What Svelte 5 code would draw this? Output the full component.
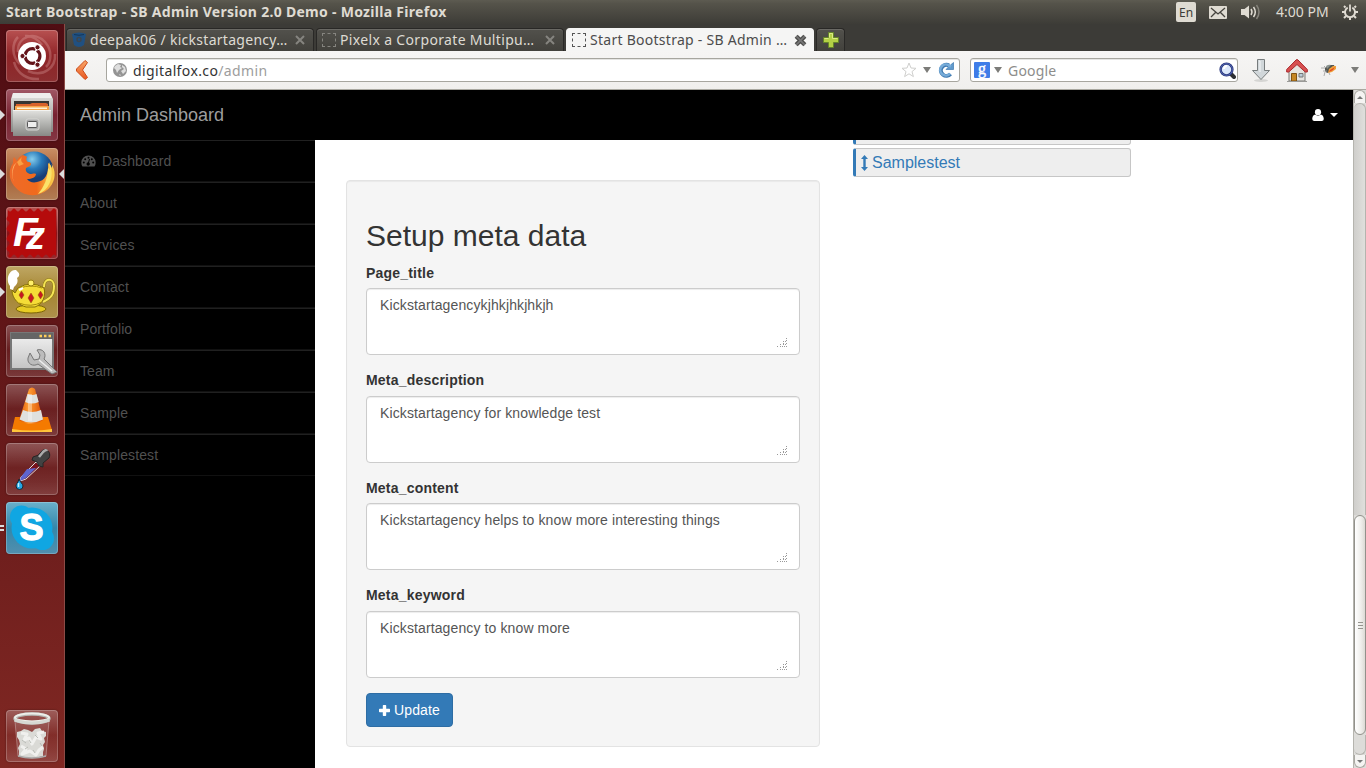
<script>
  const menu = ['Dashboard', 'About', 'Services', 'Contact', 'Portfolio', 'Team', 'Sample', 'Samplestest'];
  const fields = [
    { label: 'Page_title', value: 'Kickstartagencykjhkjhkjhkjh' },
    { label: 'Meta_description', value: 'Kickstartagency for knowledge test' },
    { label: 'Meta_content', value: 'Kickstartagency helps to know more interesting things' },
    { label: 'Meta_keyword', value: 'Kickstartagency to know more' }
  ];
  const grip = [[9, 0], [9, 2], [6, 3], [8, 3], [6, 5], [9, 5], [3, 6], [6, 6], [8, 6], [0, 8], [3, 8], [5, 8], [7, 8], [9, 8]];
  const apps = ['dash', 'files', 'firefox', 'filezilla', 'teapot', 'tools', 'vlc', 'picker', 'skype'];
  const running = { files: 1, firefox: 1, teapot: 1, skype: 2 };
</script>

<div class="screen">
  <header class="panel">
    <span class="wintitle">Start Bootstrap - SB Admin Version 2.0 Demo - Mozilla Firefox</span>
    <div class="tray">
      <span class="lang">En</span>
      <svg class="mail" width="18" height="13" viewBox="0 0 18 13"><rect width="18" height="13" rx="1" fill="#dfdbd2"/><path d="M2 2l7 6 7-6M2 11l4.500-4.500M16 11l-4.500-4.500" fill="none" stroke="#45433d" stroke-width="1.300"/></svg>
      <svg class="sound" width="20" height="16" viewBox="0 0 20 16"><path d="M0 5h3.500L8 1.500v13L3.500 11H0z" fill="#dfdbd2"/><path d="M10 5q2 3 0 6M12.500 3q3.600 5 0 10" fill="none" stroke="#dfdbd2" stroke-width="1.500"/><path d="M15.500 1q5 7 0 14" fill="none" stroke="#85827a" stroke-width="1.500"/></svg>
      <span class="clock">4:00 PM</span>
      <svg class="gear" width="16" height="16" viewBox="0 0 16 16" fill="none" stroke="#dfdbd2"><path d="M5.700 3.700a5 5 0 1 0 4.600 0" stroke-width="1.900"/><path d="M8 .5v7" stroke-width="1.800"/><path d="M3.500 3.500L2 2M12.500 3.500L14 2M3 8H0M13 8h3M4 12l-2 2M12 12l2 2M8 13.500V16" stroke-width="2"/></svg>
    </div>
  </header>

  <div class="desktop">
    <aside class="launcher">
      {#each apps as app}
        <div class="slot">
          <div class="tile {app}">
            <svg width="52" height="52" viewBox="0 0 52 52">
              {#if app === 'dash'}
                <g fill="none" stroke="#edb9b7" opacity=".28" stroke-width="2.500"><path d="M12 22C11 6 29 1 39 12 47 21 45 32 40 37"/><path d="M14 34C5 26 6 13 12 7"/><path d="M22 41c16 7 28-4 27-17"/><path d="M8 32c3 12 14 18 25 17"/><path d="M36 15Q29 5 19 6"/></g>
                <circle cx="26" cy="26" r="14" fill="#fff"/>
                <circle cx="26.500" cy="26" r="7.400" fill="none" stroke="#64141a" stroke-width="3.200" stroke-dasharray="13.900 1.600" stroke-dashoffset="7"/>
                <g fill="#64141a" stroke="#fff" stroke-width="1"><circle cx="16.500" cy="26" r="2.600"/><circle cx="31.500" cy="17.300" r="2.600"/><circle cx="31.500" cy="34.700" r="2.600"/></g>
              {:else if app === 'files'}
                <defs><linearGradient id="steel" x2="0" y2="1"><stop stop-color="#e2e2df"/><stop offset="1" stop-color="#888986"/></linearGradient></defs>
                <path d="M7 4h37l3 6v33H5V10z" fill="url(#steel)"/><path d="M7 4h37l2 5H6z" fill="#eeeeec"/>
                <path d="M8 12h35v9H8z" fill="#373633"/><path d="M10 15h14l2-1h14l2 1v6H9z" fill="#d8622b"/><path d="M9 17h34v4H9z" fill="#f5a54b"/><path d="M11 18.500h30v1.500H11z" fill="#fff2d8"/>
                <path d="M7 21h38v26H7z" fill="url(#steel)"/><path d="M7 21.500h38" stroke="#f3f3f1"/>
                <rect x="20" y="30" width="13" height="11" rx="2" fill="#aaa" stroke="#d6d6d3"/><rect x="21.500" y="32.500" width="9.500" height="6" rx="1" fill="#eee" stroke="#555"/>
              {:else if app === 'firefox'}
                <defs><radialGradient id="globe" cx=".45" cy=".2"><stop stop-color="#86cdec"/><stop offset=".5" stop-color="#2778b8"/><stop offset="1" stop-color="#173e77"/></radialGradient><linearGradient id="fox" x2="1"><stop stop-color="#ee6a2a"/><stop offset=".6" stop-color="#f06a1c"/><stop offset="1" stop-color="#fcd34e"/></linearGradient></defs>
                <circle cx="28" cy="23" r="19.500" fill="url(#globe)"/>
                <path d="M17 7c1 0 3 1 4 2-1 2-1 4 1 5 3 0 4 2 2 4l-4 2c-1 3 1 5 4 6 3 0 4-1 6 0 0 3-4 5-9 5 2 3 6 4 10 3 8-1 12-8 11-19 2 1 3 3 4 5 0-2 0-4-1-5 5 7 5 17-1 24-8 10-24 11-33 2C2 33 2 22 7 15c0-2 0-4 1-6l3 4c1-3 3-5 6-6z" fill="url(#fox)"/>
                <path d="M43 14c5 9 3 21-4 28-2 2-5 3-7 4 6-7 10-16 10-26l2 2z" fill="#fbe269"/><path d="M11 14c-4 5-6 12-3 20-3-7-2-13 0-17z" fill="#ffb066"/><path d="M17 8c-3 3-2 6 1 8l-5 2-2-4z" fill="#f9a044"/>
              {:else if app === 'filezilla'}
                <path d="M2 3q2 3 4 0t4 0 4 0 4 0 4 0 4 0 4 0 4 0 4 0 4 0 4 0 4 0v46q-2-3-4 0t-4 0-4 0-4 0-4 0-4 0-4 0-4 0-4 0-4 0-4 0-4 0q3-3 0-5t0-5 0-5 0-5 0-5 0-5 0-5 0-5z" fill="#b50b0c"/>
                <text x="7" y="39" font-family="Liberation Sans" font-size="41" font-style="italic" font-weight="bold" fill="#fff">F<tspan dx="-12" dy="3" font-size="38">z</tspan></text>
              {:else if app === 'teapot'}
                <path d="M4 20C-1 14 3 3 10 4q6 5 1 8 2 5-3 9l-1 3-3-1z" fill="#fff"/>
                <path d="M38 21c0-10 10-9 10-1 0 9-3 12-11 16" fill="none" stroke="#8c7a10" stroke-width="3"/><path d="M38 21c0-10 10-9 10-1 0 9-3 12-11 16" fill="none" stroke="#f5e455" stroke-width="2"/>
                <ellipse cx="25" cy="43" rx="15" ry="4" fill="#e8cc24" stroke="#7b6406"/>
                <path d="M12 22q13-8 26 0c2 8-1 16-9 19h-9C13 39 6 33 6 24l3 3z" fill="#f5dc37" stroke="#857008"/><path d="M14 22q11-4 22 0M13 37q12 5 23-1" fill="none" stroke="#a78b0c"/>
                <circle cx="25" cy="17" r="3" fill="#fff06a" stroke="#998010"/><g fill="#c81821" stroke="#8c5a0c" stroke-width=".5"><path d="M25 27l3 5-3 5-3-5z"/><path d="M15.500 25l2.500 4-2.500 4-2.500-4zM34.500 25l2.500 4-2.500 4-2.500-4z"/></g><path d="M13 24l4-2" stroke="#fff" stroke-width="2"/>
              {:else if app === 'tools'}
                <defs><linearGradient id="win" x2="0" y2="1"><stop stop-color="#f2f2f2"/><stop offset="1" stop-color="#c4c4c4"/></linearGradient></defs>
                <rect x="5" y="8" width="42" height="36" fill="url(#win)" stroke="#777" stroke-width="2"/><path d="M5 8h42v6H5z" fill="#656565"/><path d="M33.500 11h2.500M38 11h2.500M42.500 11h2.500" stroke="#ffcd5b" stroke-width="2.500"/>
                <path d="M24 28l-2 5c-1 6 5 9 10 6l14 10 5-2-13-13c3-5-1-11-7-9l3 5-1 4-5 1z" fill="#bcbcbc" stroke="#777"/><path d="M33 35l13 11" stroke="#eee" stroke-width="1.500"/>
              {:else if app === 'vlc'}
                <defs><linearGradient id="cone" x2="1"><stop stop-color="#d94f00"/><stop offset=".4" stop-color="#ff9e35"/><stop offset="1" stop-color="#d94b00"/></linearGradient></defs>
                <path d="M9 33h33l4 13q-20 4-40 0z" fill="#f47a00"/><path d="M6 45q20 3 40 0v3H6z" fill="#ffc43b"/>
                <path d="M23 5q3-3 6 0l8 31q-12 8-24 0z" fill="url(#cone)"/><path d="M21.500 10q4.500 2 9 0l2.200 8q-7 3-13.500 0zM17 26q9 4 18 0l2 9.500q-12 6-23.500 0z" fill="#dfe1df"/><path d="M24 10v27" stroke="#fff" opacity=".35" stroke-width="4"/>
              {:else if app === 'picker'}
                <path d="M15 34l15-15 4 4-14 13-6 2z" fill="#77131c" stroke="#ddd"/><path d="M15 34l6-8 9-1-10 10-6 3z" fill="#5e65ce"/><path d="M27 14q6-1 8-5c4-6 11 0 8 6l-6 5 0 4-4-1-2-4-5-2z" fill="#424242" stroke="#262626"/><path d="M33 14l4-5q3-3 4-1" fill="none" stroke="#aaa" stroke-width="2.500"/><path d="M13 36c-1 4-3 5-3 7a3.500 3.500 0 0 0 7 0c0-2-3-4-4-7z" fill="#25a6e6" stroke="#1c2630"/><path d="M12.500 40v4" stroke="#c2f1ff" stroke-width="1.500"/>
              {:else}
                <g fill="#10a6e2"><circle cx="26" cy="26" r="20.500"/><circle cx="15.500" cy="15" r="11.500"/><circle cx="36.500" cy="36.500" r="11.500"/></g><text x="13.500" y="38" font-family="Liberation Sans" font-size="36" font-weight="bold" fill="#fff" stroke="#fff" stroke-width="1.300" stroke-linejoin="round">S</text>
              {/if}
            </svg>
          </div>
          {#if running[app] === 1}<i class="pip"></i>{:else if running[app] === 2}<i class="pip twin"></i>{/if}
          {#if app === 'firefox'}<i class="focus"></i>{/if}
        </div>
      {/each}
      <div class="slot trash">
        <div class="tile">
          <svg width="52" height="52" viewBox="0 0 52 52"><path d="M9 11l3 35q14 4 28 0l3-35z" fill="#fff" fill-opacity=".1" stroke="#fff" stroke-opacity=".3"/><path d="M11 22l4-1 3-2 4 1 4 2 3-3 5-1 2 3 4 1 0 4-2 2 1 4-2 3 1 4-1 3 0 4q-12 4-24 0l0-5-1-3 2-4-1-4-2-3z" fill="#dadad6"/><path d="M15 23l6 1-3 6 5-2 3 6 4-7 5 2-3-6 6-1M15 36l5 3-4 5 8-3 6 4 3-5 4-3" fill="none" stroke="#f0f0ee" stroke-width="3" stroke-linejoin="round"/><path d="M16 30l4 3M29 25l3 3M22 37l-3 2M34 33l2 3M27 40l2 3M23 30l2 3" stroke="#b9bcb6"/><path d="M12 46q14 4 28 0" fill="none" stroke="#aaa" stroke-width="1.500"/><ellipse cx="26" cy="8.500" rx="17" ry="4.500" fill="none" stroke="#b5b7b3" stroke-width="3.500"/><ellipse cx="26" cy="7.500" rx="17" ry="4" fill="none" stroke="#edeeea" stroke-width="2"/><path d="M8.500 10Q26 16 43.500 10" fill="none" stroke="#d6d8d3" stroke-width="3"/></svg>
        </div>
      </div>
    </aside>

    <div class="browser">
      <nav class="tabs">
        <div class="tab">
          <svg width="14" height="16" viewBox="0 0 14 16"><path d="M0 2q7-3 14 0l-2 11q-5 4-10 0z" fill="#205081"/><path d="M2 2.500q5 1.500 10 0" fill="none" stroke="#11375d"/><circle cx="7" cy="7.500" r="2" fill="none" stroke="#3b4650" stroke-width="1.500"/></svg>
          <span class="t1">deepak06 / kickstartagency…</span><svg class="x" width="10" height="10" viewBox="0 0 10 10"><path d="M1 1l8 8M9 1L1 9" stroke="#85847f" stroke-width="2"/></svg>
        </div>
        <div class="tab">
          <i class="blank"></i><span class="t2">Pixelx a Corporate Multipu…</span><svg class="x" width="10" height="10" viewBox="0 0 10 10"><path d="M1 1l8 8M9 1L1 9" stroke="#85847f" stroke-width="2"/></svg>
        </div>
        <div class="tab active">
          <i class="blank"></i><span class="t3">Start Bootstrap - SB Admin …</span><svg class="x" width="13" height="13" viewBox="0 0 12 12"><path d="M2 2l8 8M10 2l-8 8" stroke="#4c4c4a" stroke-width="4"/><path d="M2 2l8 8M10 2l-8 8" stroke="#777" stroke-width="1.500"/></svg>
        </div>
        <div class="tab new"><svg width="16" height="16" viewBox="0 0 16 16"><path d="M5.500.5h5v5h5v5h-5v5h-5v-5h-5v-5h5z" fill="#b4d046" stroke="#65852a"/><path d="M6.500 5.500v-4h3v5h5M1.500 6.500h4" fill="none" stroke="#dbea84"/></svg></div>
      </nav>

      <div class="toolbar">
        <svg class="back" width="12" height="20" viewBox="0 0 12 20"><defs><linearGradient id="orange" x2="0" y2="1"><stop stop-color="#f8a76a"/><stop offset="1" stop-color="#e9561e"/></linearGradient></defs><path d="M9 .5l2.500 2-5 7.500 5 7.500-2.500 2L.5 11V9z" fill="url(#orange)" stroke="#cc4c1b"/></svg>
        <div class="url">
          <svg class="world" width="14" height="14" viewBox="0 0 14 14"><circle cx="7" cy="7" r="7" fill="#949494"/><path d="M2 3l3-2 3 1-1 2 2 1-3 2-2 3-1-3-2-2zM9 2l3 2 1 4-3 3-2-3 3-2-2-2zM6 11l2 1-1 1z" fill="#dedede"/></svg>
          <span class="address">digitalfox.co<em>/admin</em></span>
          <svg class="star" width="16" height="16" viewBox="0 0 16 16"><path d="M8 1l2 5 5 .3-4 3.300 1.400 5L8 11.800l-4.400 2.800 1.400-5L1 6.300 6 6z" fill="#fff" stroke="#cfcfcd"/></svg>
          <i class="caret"></i>
          <svg class="reload" width="16" height="16" viewBox="0 0 16 16"><path d="M12.500 12A5.500 5.500 0 1 1 11 3.500" fill="none" stroke="#3f79b0" stroke-width="4"/><path d="M8 7.500h7.500V.5l-3 2.500z" fill="#5f99cc" stroke="#3f79b0" stroke-width=".7"/><path d="M12 11.500A5.500 5.500 0 1 1 11 3.500l2 1" fill="none" stroke="#77acd9" stroke-width="2.600"/></svg>
        </div>
        <div class="search">
          <svg class="engine" width="16" height="16" viewBox="0 0 16 16"><rect width="16" height="16" rx="1" fill="#3f7de8"/><text x="4" y="11.500" font-family="Liberation Serif" font-size="16" fill="#fff" stroke="#fff" stroke-width=".4">g</text></svg>
          <i class="caret"></i><span>Google</span>
          <svg class="lens" width="17" height="17" viewBox="0 0 17 17"><path d="M12 12l3 3" stroke="#2e3033" stroke-width="4" stroke-linecap="round"/><circle cx="7.500" cy="7.500" r="5.900" fill="#dce8fb" stroke="#28367c" stroke-width="2.400"/><circle cx="7.500" cy="7.500" r="5.900" fill="none" stroke="#5f72bd" stroke-width=".8"/><path d="M5 7q0-3 3-3" stroke="#fff" stroke-width="2" fill="none"/></svg>
        </div>
        <svg class="down" width="18" height="23" viewBox="0 0 18 23"><ellipse cx="9" cy="21.500" rx="7" ry="1.500" fill="#d5d5d3"/><path d="M5.500.5h7v11h5L9 20.500.5 11.500h5z" fill="#d1d7da" stroke="#777c7d"/><path d="M7 2h1v11" fill="none" stroke="#f5f7f8"/></svg>
        <svg class="home" width="22" height="23" viewBox="0 0 22 23"><path d="M3 10l8-7 8 7v12H3z" fill="#e6e4df" stroke="#7b7b77"/><path d="M.7 10.500L10 1q1-1 2 0l9.300 9.500V13l-2 0-8.300-7.500L2.700 13l-2 0z" fill="#d85050" stroke="#a9282c"/><path d="M5.500 14.500h5V22h-5z" fill="#c58622" stroke="#805313"/><path d="M13 14.500h4V18h-4z" fill="#b9ccd8" stroke="#777"/><path d="M1 22.500h20" stroke="#9b9b98"/></svg>
        <svg class="fly" width="17" height="14" viewBox="0 0 17 14"><path d="M4 5l4-3 5 0 1 3-5 4-3 1-2-2z" fill="#545652"/><path d="M8 6l4-3 3 0 0 3-4 3-4 1z" fill="#f0a13a"/><path d="M9 7l5-3-2 3-4 2z" fill="#e34a22"/><path d="M0 5h4M4 9l-1 4M8 10l1 2M2 8h4M3 3l2 2" stroke="#999" stroke-width=".8"/><path d="M5 3q3-2 5-1L6 6z" fill="#8b9490"/></svg>
        <i class="caret last"></i>
      </div>

      <div class="viewport">
        <div class="page">
          <div class="brandbar"><span>Admin Dashboard</span>
            <div class="user"><svg width="12" height="12" viewBox="0 0 12 12" fill="#fff"><circle cx="6" cy="3.200" r="3.100"/><path d="M3 5.500Q.5 6 .3 9v1.300Q.4 12 2.200 12h7.600q1.800 0 1.900-1.700V9Q11.500 6 9 5.500q-3 2.300-6 0z"/></svg><i></i></div>
          </div>
          <div class="columns">
            <ul class="menu">
              {#each menu as item, i}
                <li>{#if i === 0}<svg width="15" height="12" viewBox="0 0 15 12"><path d="M7.500.5A7 7 0 0 0 .3 7.500q0 2.300 1.200 4h12q1.200-1.700 1.200-4A7 7 0 0 0 7.500.5z" fill="#505050"/><g fill="#000"><circle cx="2.800" cy="7.500" r="1"/><circle cx="4.200" cy="4.200" r="1"/><circle cx="7.500" cy="2.700" r="1"/><circle cx="10.800" cy="4.200" r="1"/><circle cx="12.200" cy="7.500" r="1"/><circle cx="7.200" cy="9" r="1.700"/></g><path d="M7.200 9l1.300-5" stroke="#000" stroke-width="1"/></svg>{/if}{item}</li>
              {/each}
            </ul>
            <main>
              <form class="well">
                <h2>Setup meta data</h2>
                {#each fields as field}
                  <div class="group">
                    <b>{field.label}</b>
                    <div class="area"><span>{field.value}</span>
                      <svg width="10" height="9" viewBox="0 0 10 9" shape-rendering="crispEdges">{#each grip as [x, y]}<rect {x} {y} width="1" height="1" fill="#999"/>{/each}</svg>
                    </div>
                  </div>
                {/each}
                <button type="button"><svg width="11" height="11" viewBox="0 0 11 11"><path d="M3.800.7Q3.800 0 4.500 0h2Q7.200 0 7.200.7v3.100h3.100q.7 0 .7.700v2q0 .7-.7.700H7.200v3.100q0 .7-.7.700h-2q-.7 0-.7-.7V7.200H.7Q0 7.200 0 6.500v-2q0-.7.700-.7h3.100z" fill="#fff"/></svg>Update</button>
              </form>
              <div class="list">
                <div class="entry cut"></div>
                <div class="entry"><svg width="7" height="16" viewBox="0 0 7 16"><path d="M3.500 0L7 4H4.700v8H7l-3.500 4L0 12h2.300V4H0z" fill="#337ab7"/></svg>Samplestest</div>
              </div>
            </main>
          </div>
        </div>
        <div class="scroll">
          <div class="btn up"><i></i></div><div class="upper"></div>
          <div class="thumb"><i></i><i></i><i></i></div>
          <div class="lower"></div><div class="btn dn"><i></i></div>
        </div>
      </div>
    </div>
  </div>
</div>

<style>
  :global(body) { overflow: hidden; background: #fff; }
  * { box-sizing: border-box; }
  svg { display: block; flex: none; }
  .screen { width: 1366px; height: 768px; display: flex; flex-direction: column; font-family: "Liberation Sans", sans-serif; overflow: hidden; }
  .panel { height: 24px; flex: none; display: flex; justify-content: space-between; background: linear-gradient(#5d5b51, #55534a 15%, #3d3c37); color: #dfdbd2; font-family: "Noto Sans", sans-serif; white-space: nowrap; }
  .wintitle { padding-left: 6px; font-size: 14px; font-weight: 700; line-height: 24px; letter-spacing: .29px; }
  .tray { display: flex; align-items: center; padding-right: 8px; }
  .lang { width: 20px; height: 20px; border-radius: 2px; background: #dfdbd2; color: #3c3b37; font-size: 12px; line-height: 21px; text-align: center; margin-right: 13px; }
  .mail { margin-right: 14px; }
  .sound { margin-right: 15px; }
  .clock { width: 53px; font-size: 14px; line-height: 24px; margin-right: 13px; }
  .desktop { flex: 1; display: flex; min-height: 0; }
  .launcher { width: 65px; flex: none; padding: 6px 0 6px 6px; display: flex; flex-direction: column; gap: 7px; background: linear-gradient(#500d13, #641819 50%, #802823); border-right: 1px solid #8b4b46; }
  .slot { position: relative; height: 52px; flex: none; }
  .trash { margin-top: auto; }
  .tile { width: 52px; height: 52px; border-radius: 4px; background: linear-gradient(#ffffff42, #ffffff08 48%, #ffffff14 75%, #ffffff26); box-shadow: inset 0 0 0 1px #ffffff38, 0 0 2px #0006; overflow: hidden; }
  .dash { background: linear-gradient(#b85252, #8f2427 50%, #8d3032); }
  .files { background: linear-gradient(#a15865, #782331 50%, #853744); }
  .firefox { background: linear-gradient(#c98f65, #a85e34 50%, #b17e55); }
  .filezilla { background: linear-gradient(#b85351, #8c1116 50%, #96292c); }
  .teapot { background: linear-gradient(#bfa764, #a58531 50%, #ae914c); }
  .skype { background: linear-gradient(#6ab0cb, #3487aa 50%, #518fae); }
  .pip, .focus { position: absolute; top: 21px; left: -6px; border: 5px solid transparent; border-left-color: #dcdcdc; border-right-width: 0; }
  .twin { width: 4px; height: 6px; border: solid #ddd; border-width: 2px 0; top: 23px; }
  .focus { left: 53px; border-width: 5px 5px 5px 0; border-color: transparent #dcdcdc; }
  .browser { flex: 1; min-width: 0; display: flex; flex-direction: column; font-family: "Noto Sans", sans-serif; }
  .tabs { height: 27px; flex: none; display: flex; gap: 2px; align-items: flex-end; padding-left: 1px; background: #3c3b37; white-space: nowrap; }
  .tab { width: 248px; height: 23px; padding: 0 8px 0 5px; display: flex; align-items: center; border: 1px solid #292826; border-bottom: 0; border-radius: 4px 4px 0 0; background: linear-gradient(#52514c, #42413c); box-shadow: inset 0 1px #6a6964; color: #dedbd3; font-size: 14px; line-height: 22px; }
  .tab span { margin-left: 4px; }
  .tab .x { margin-left: auto; }
  .t1 { letter-spacing: .28px; }
  .t2 { letter-spacing: .34px; }
  .t3 { letter-spacing: .27px; }
  .blank { width: 14px; height: 14px; border: 1px dashed #85847f; flex: none; }
  .active { background: #f5f5f4; color: #4c4c4c; border-color: #f5f5f4; box-shadow: none; }
  .active .blank { border-color: #555; }
  .active .x { margin-right: -2px; }
  .new { width: 29px; padding: 0; justify-content: center; }
  .toolbar { height: 39px; flex: none; display: flex; align-items: center; padding: 0 7px 0 11px; background: linear-gradient(#f6f5f4, #f0efed); border-bottom: 1px solid #a9a8a0; }
  .back { margin-right: 18px; }
  .url, .search { height: 24px; display: flex; align-items: center; border: 1px solid #a7a69f; border-radius: 3px; background: #fff; box-shadow: inset 0 1px #e5e5e3; font-size: 14px; line-height: 23px; }
  .url { width: 854px; padding: 0 5px 0 6px; margin-right: 10px; }
  .address { margin-left: 6px; color: #333; margin-right: auto; letter-spacing: .38px; }
  .address em { font-style: normal; color: #9d9d9d; }
  .caret { width: 8px; border: 4px solid transparent; border-top: 6px solid #7c7c79; border-bottom: 0; flex: none; }
  .star { margin-right: 6px; }
  .reload { margin-left: 7px; }
  .search { width: 268px; padding: 0 1px 0 3px; }
  .engine { overflow: visible; }
  .search .caret { margin-left: 4px; }
  .search span { margin-left: 6px; color: #8d8d8b; letter-spacing: .2px; }
  .lens { margin-left: auto; }
  .down { margin-left: 14px; }
  .home { margin-left: 16px; }
  .fly { margin-left: 13px; }
  .last { margin-left: auto; }
  .viewport { flex: 1; min-height: 0; display: flex; }
  .page { flex: 1; display: flex; flex-direction: column; font: 14px/20px "Liberation Sans", sans-serif; color: #333; background: #fff; }
  .brandbar { height: 50px; flex: none; display: flex; justify-content: space-between; align-items: center; padding: 0 15px; background: #000; color: #9d9d9d; font-size: 18px; }
  .user { display: flex; align-items: center; gap: 6px; }
  .user i { border: 4px solid transparent; border-top-color: #fff; border-bottom: 0; }
  .columns { flex: 1; min-height: 0; display: flex; }
  .menu { width: 250px; flex: none; margin: 0; padding: 0; list-style: none; background: #000; color: #505050; letter-spacing: .1px; }
  .menu li { height: 42px; display: flex; align-items: center; padding-left: 15px; border-top: 1px solid #202020; border-bottom: 1px solid #111; }
  .menu svg { margin: 0 6px 0 1px; }
  main { flex: 1; display: flex; align-items: flex-start; padding-left: 31px; overflow: hidden; }
  .well { width: 474px; margin: 40.200px 33px 0 0; padding: 19px; border: 1px solid #e3e3e3; border-radius: 4px; background: #f5f5f5; box-shadow: inset 0 1px 1px #0000000d; }
  h2 { margin: 19px 0 10.600px; font-size: 30px; line-height: 33px; font-weight: 400; }
  .group { margin-bottom: 15.500px; }
  .group b { display: block; margin-bottom: 5.400px; letter-spacing: .2px; }
  .group + .group { margin-top: -.4px; }
  .group:last-of-type { margin-bottom: 15.500px; }
  .area { height: 67px; display: flex; justify-content: space-between; align-items: flex-start; padding: 6px 12px 7px 13px; border: 1px solid #ccc; border-radius: 4px; background: #fff; box-shadow: inset 0 1px 1px #00000013; color: #555; letter-spacing: .115px; }
  .area svg { align-self: flex-end; }
  button { height: 34px; width: 87px; padding: 0 12px; display: flex; align-items: center; gap: 4px; border: 1px solid #2e6da4; border-radius: 4px; background: #337ab7; color: #fff; font: 14px/20px "Liberation Sans", sans-serif; letter-spacing: .12px; }
  .list { width: 278px; display: flex; flex-direction: column; gap: 3px; }
  .entry { height: 29px; display: flex; align-items: center; gap: 4px; padding-left: 5px; border: 1px solid #c6c6c6; border-left: 3px solid #337ab7; border-radius: 3px; background: #eee; color: #337ab7; font-size: 16px; }
  .cut { margin-top: -24px; }
  .scroll { width: 13px; flex: none; display: flex; flex-direction: column; background: #dddcd9; border-left: 1px solid #b5b4ae; }
  .btn { height: 13px; display: flex; align-items: center; justify-content: center; border: 1px solid #aaa9a3; background: #f5f4f2; }
  .btn i { border: 3px solid transparent; border-bottom-color: #777; border-top: 0; }
  .dn i { transform: rotate(180deg); }
  .up { border-radius: 6px 6px 0 0; border-bottom: 0; }
  .dn { border-radius: 0 0 6px 6px; border-top: 0; }
  .upper { height: 412px; border: 1px solid #b5b4ae; border-left: 0; border-bottom: 0; border-radius: 6px 6px 0 0; background: linear-gradient(90deg, #cfcecb, #e0dfdc); }
  .thumb { height: 220px; border: 1px solid #92918b; border-radius: 6px; background: linear-gradient(90deg, #fff, #efeeeb 60%, #dcdad5); display: flex; flex-direction: column; align-items: center; justify-content: center; gap: 2px; }
  .thumb i { width: 5px; height: 1px; background: #96958f; }
  .lower { flex: 1; border-right: 1px solid #b5b4ae; border-bottom: 1px solid #b5b4ae; border-radius: 0 0 6px 6px; }
</style>
